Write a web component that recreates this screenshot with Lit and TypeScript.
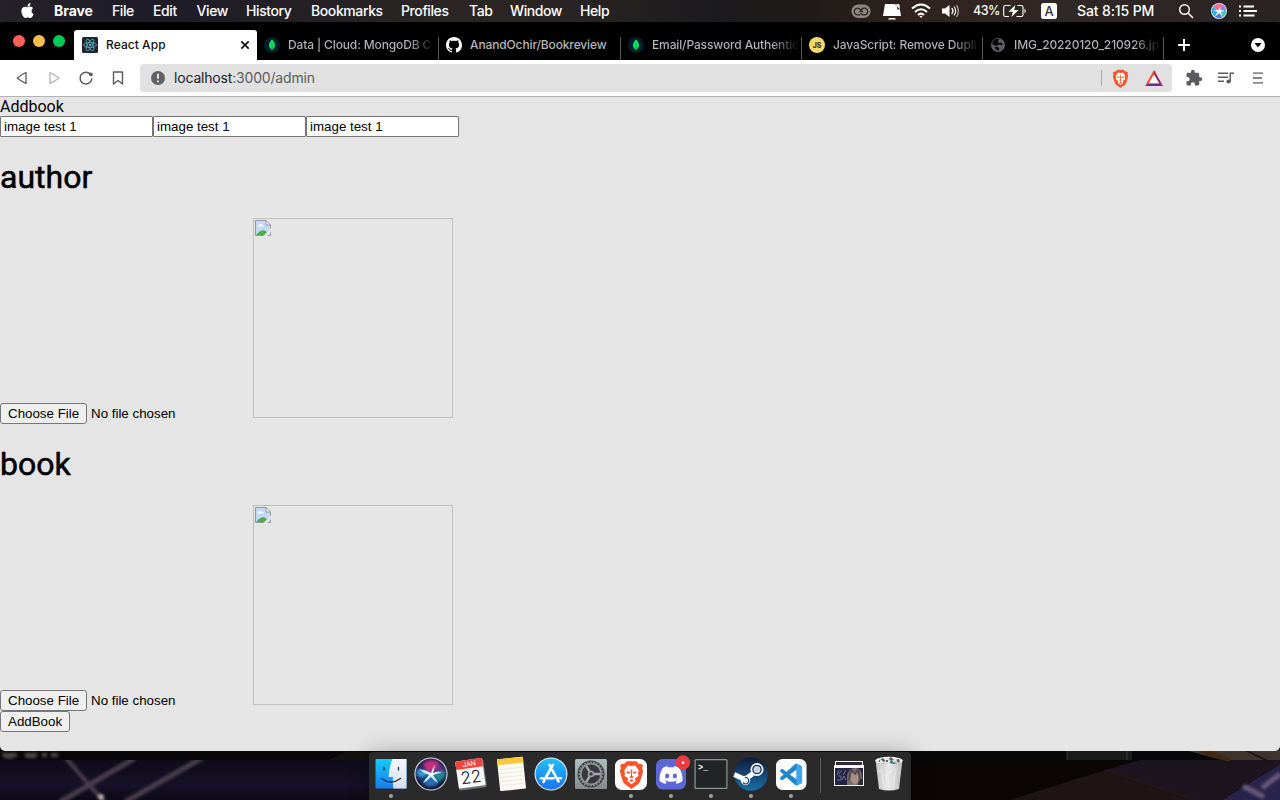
import { LitElement, html, svg, css } from "lit";
import { customElement, property } from "lit/decorators.js";

const leafIcon = html`<svg width="16" height="16" viewBox="0 0 16 16">
  <circle cx="8" cy="8" r="8" fill="#011e2b" />
  <path d="M8 2.400C10 4.400 11 6.200 11 8.300 11 10.400 9.900 11.700 8.400 12.500L8.200 13.800H7.800L7.600 12.500C6.100 11.700 5 10.400 5 8.300 5 6.200 6 4.400 8 2.400Z" fill="#00ed64" />
  <path d="M8 6V12.600" stroke="#00854a" stroke-width=".8" />
</svg>`;

const reactIcon = html`<svg width="16" height="16" viewBox="0 0 16 16">
  <rect width="16" height="16" rx="1.500" fill="#20232a" />
  <g fill="none" stroke="#57bdd6" stroke-width=".75">
    <ellipse cx="8" cy="8" rx="6.500" ry="2.500" />
    <ellipse cx="8" cy="8" rx="6.500" ry="2.500" transform="rotate(60 8 8)" />
    <ellipse cx="8" cy="8" rx="6.500" ry="2.500" transform="rotate(120 8 8)" />
  </g>
  <circle cx="8" cy="8" r="1.200" fill="#57bdd6" />
</svg>`;

const githubIcon = html`<svg width="16" height="16" viewBox="0 0 16 16">
  <path fill="#fff" d="M8 0C3.580 0 0 3.580 0 8c0 3.540 2.290 6.530 5.470 7.590.4.070.55-.17.55-.38 0-.19-.01-.82-.01-1.490-2.010.37-2.530-.49-2.690-.94-.09-.23-.48-.94-.82-1.130-.28-.15-.68-.52-.01-.53.63-.01 1.080.58 1.230.82.72 1.210 1.870.87 2.330.66.07-.52.28-.87.51-1.070-1.780-.2-3.640-.89-3.640-3.950 0-.87.31-1.590.82-2.150-.08-.2-.36-1.020.08-2.120 0 0 .67-.21 2.200.82.64-.18 1.320-.27 2-.27s1.360.09 2 .27c1.530-1.040 2.200-.82 2.200-.82.44 1.100.16 1.920.08 2.120.51.56.82 1.270.82 2.150 0 3.070-1.870 3.750-3.650 3.950.29.25.54.73.54 1.480 0 1.070-.01 1.930-.01 2.200 0 .21.15.46.55.38A8.010 8.010 0 0 0 16 8c0-4.420-3.580-8-8-8z" />
</svg>`;

const jsIcon = html`<svg width="16" height="16" viewBox="0 0 16 16">
  <circle cx="8" cy="8" r="8" fill="#f7d969" />
  <text x="8" y="10.800" text-anchor="middle" font-family="Inter, sans-serif" font-weight="800" font-size="7" fill="#3d3820">JS</text>
</svg>`;

const globeIcon = html`<svg width="16" height="16" viewBox="0 0 16 16">
  <circle cx="8" cy="8" r="7" fill="#5a5d62" />
  <path d="M5.500 2 9.500 1.800 7.800 4 9 6 11.500 5.500 13 7.500 11 8 8.500 7.500 7 8.800 4 8.200 2 6.500 3 4ZM4.500 10 7.500 9.800 9.500 11.500 8 14 6 12.500Z" fill="#08090a" />
</svg>`;

const brave = (s: number) => html`<svg width=${s} height=${s} viewBox="0 0 24 24">
  <path fill="#fb542b" d="M16 1h-8L6 3.200C4.300 2.700 3.300 3.700 2.500 4.700L3.300 6.700 2.300 8.800C4 15 4.600 18 6.200 19.700 8 21.500 10.300 22.600 12 24 13.700 22.600 16 21.500 17.800 19.700 19.400 18 20 15 21.700 8.800L20.700 6.700 21.500 4.700C20.700 3.700 19.700 2.700 18 3.200Z" />
  <path fill="#fff" d="M12 5 15 4.500 18 8.500 17.300 11.500 18 13 14.800 15.300 15.500 17.300 12 20 8.500 17.300 9.200 15.300 6 13 6.700 11.500 6 8.500 9 4.500Z" />
  <path fill="#fb542b" d="M7.800 9.300 11 10 10.400 11.200 8.200 11ZM16.200 9.300 13 10 13.600 11.200 15.800 11ZM11.300 7.800h1.400L12.400 13 13.800 14.200 12 15 10.200 14.200 11.600 13ZM10 16.700 12 15.900 14 16.700 12 18.200Z" />
</svg>`;

const siri = html`<svg width="34" height="34" viewBox="0 0 34 34">
  <defs>
    <linearGradient id="sa" x1="0" y1="0" x2=".2" y2="1"><stop offset="0" stop-color="#2c1c4c" /><stop offset=".5" stop-color="#2a2f68" /><stop offset="1" stop-color="#0b1530" /></linearGradient>
    <filter id="sf" x="-30%" y="-30%" width="160%" height="160%"><feGaussianBlur stdDeviation="1.400" /></filter>
    <filter id="sg" x="-30%" y="-30%" width="160%" height="160%"><feGaussianBlur stdDeviation=".5" /></filter>
    <clipPath id="sc"><circle cx="17" cy="17" r="15.300" /></clipPath>
  </defs>
  <circle cx="17" cy="17" r="16.600" fill="#d9dae0" />
  <circle cx="17" cy="17" r="15.500" fill="url(#sa)" />
  <g clip-path="url(#sc)">
    <g filter="url(#sf)">
      <path d="M9 7Q17 0 25 6L22 12 17 16 12 13Z" fill="#c72f80" />
      <path d="M25 7Q31 12 29 17L18 16Z" fill="#6c2d86" />
      <path d="M3 12 16 16 8 21 3 18Z" fill="#2ea1dc" />
      <path d="M31 14 18 17 25 25 31 20Z" fill="#1d8c96" />
      <path d="M17 18 8 25 14 30 22 29 25 25Z" fill="#2a6cb3" />
    </g>
    <g filter="url(#sg)">
      <path d="M5 12Q12 13 17 16 19 10 21 8 20 13 19 16 24 14 28 15 23 17 19 18 22 22 24 26 19 23 17 20 13 24 9 26 12 21 15 18 9 16 5 12Z" fill="#c8f2f7" />
      <circle cx="17.500" cy="17.500" r="2" fill="#fff" />
    </g>
  </g>
</svg>`;

const menuSiri = html`<svg width="16" height="16" viewBox="0 0 16 16">
  <circle cx="8" cy="8" r="8" fill="#e9eaf2" />
  <path d="M8 8 2 4A7 7 0 0 1 11 1.600Z" fill="#ef6f9b" /><path d="M8 8 11 1.600A7 7 0 0 1 15 7Z" fill="#a87be0" />
  <path d="M8 8 2 4A7 7 0 0 0 4 13.800Z" fill="#37aee3" /><path d="M8 8 4 13.800A7 7 0 0 0 11 14.400Z" fill="#4b7de0" />
  <path d="M8 8 15 7A7 7 0 0 1 11 14.400Z" fill="#42c3c0" />
  <path d="M9 4 9.500 7 13.500 8 9.800 9 11.500 13.500 8.500 10 4 13.500 6.500 9 2.500 7 7.500 7Z" fill="#fff" />
</svg>`;

const appleIcon = html`<svg class="apple" width="15" height="15" viewBox="0 0 24 24"><path fill="#fff" d="M12.152 6.896c-.948 0-2.415-1.078-3.960-1.040-2.040.027-3.910 1.183-4.961 3.014-2.117 3.675-.546 9.103 1.519 12.090 1.013 1.454 2.208 3.090 3.792 3.039 1.520-.065 2.090-.987 3.935-.987 1.831 0 2.350.987 3.960.948 1.637-.026 2.676-1.480 3.676-2.948 1.156-1.688 1.636-3.325 1.662-3.415-.039-.013-3.182-1.221-3.220-4.857-.026-3.040 2.480-4.494 2.597-4.559-1.429-2.090-3.623-2.324-4.390-2.376-2-.156-3.675 1.090-4.610 1.090zM15.530 3.830c.843-1.012 1.400-2.427 1.245-3.830-1.207.052-2.662.805-3.532 1.818-.78.896-1.454 2.338-1.273 3.714 1.338.104 2.715-.688 3.559-1.701" /></svg>`;

@customElement("menu-bar")
export class MenuBar extends LitElement {
  static styles = css`
    :host {
      display: grid;
      grid-template-columns: 54px 58px 41px 43.500px 49.500px 65px 90px 68px 41px 70px 271px 32px 28px 31px 31px 30px 38px 36px 101px 33px 28px 1fr;
      height: 22px;
      align-items: center;
      background: linear-gradient(90deg, #242128 0, #1e1c28 12%, #242025 24%, #2b2523 34%, #2a2524 44%, #1b1a1c 56%, #1f1a19 63%, #30231d 71%, #302826 82%, #292321 100%);
      color: #fff;
      font: 500 14px/22px Inter, sans-serif;
      letter-spacing: -0.400px;
      white-space: nowrap;
    }
    svg { display: block; }
    .apple { margin-left: 20px; margin-top: -2px; }
    .app { font-weight: 700; letter-spacing: -0.050px; }
    .pct { font-size: 12.500px; letter-spacing: -0.500px; }
    .clock { letter-spacing: -0.120px; }
    .input { width: 16px; height: 16px; border-radius: 2.500px; background: #fff; color: #333; font: 500 13px/16px Inter, sans-serif; text-align: center; }
  `;
  render() {
    return html`
      ${appleIcon}
      <span class="app">Brave</span>
      ${["File", "Edit", "View", "History", "Bookmarks", "Profiles", "Tab", "Window", "Help"].map((t) => html`<span>${t}</span>`)}
      <svg width="20" height="16" viewBox="0 0 20 16"><rect x=".5" y="1.500" width="19" height="13.500" rx="6.700" fill="#8d8783" /><g fill="none" stroke="#2d2420"><path d="M9.300 11.800H6.500A3.300 3.300 0 1 1 8.800 6.100L12 9.300" stroke-width="1.300" /><path d="M8.500 9 10.800 6.200A3.400 3.400 0 1 1 13.400 11.900H11.500L9.500 10" stroke-width="1.300" /></g></svg>
      <svg width="18" height="17" viewBox="0 0 18 17"><path fill="#fff" d="M2 1H16L18 13H0ZM6 15H12L13 16.500H5Z" /><path d="M12 1 17 6.500 14.500 6.500 13.500 1Z" fill="#332a27" /><path d="M13 1H16L17 5Z" fill="#fff" /></svg>
      <svg width="20" height="16" viewBox="0 0 20 16"><g fill="none" stroke="#fff" stroke-width="2"><path d="M1 5.500Q10-2.500 19 5.500" /><path d="M4 9Q10 3.500 16 9" /><path d="M7 12Q10 9.200 13 12" /></g><path d="M8.500 13.300Q10 12.100 11.500 13.300L10 15Z" fill="#fff" /></svg>
      <svg width="18" height="14" viewBox="0 0 18 14"><path d="M0 4.500H3L7.500 1V13L3 9.500H0Z" fill="#fff" /><g fill="none" stroke="#fff" stroke-width="1.300" stroke-linecap="round"><path d="M10 4.500Q12 7 10 9.500" /><path d="M12.300 3Q15 7 12.300 11" opacity=".9" /><path d="M14.800 1.500Q18 7 14.800 12.500" opacity=".6" /></g></svg>
      <span class="pct">43%</span>
      <svg width="24" height="14" viewBox="0 0 24 14"><path d="M7.500 1.500H2.500Q.7 1.500.7 3.300V10.700Q.7 12.500 2.500 12.500H6M14.500 1.500H18.200Q20 1.500 20 3.300V10.700Q20 12.500 18.200 12.500H13.500" fill="none" stroke="#fff" stroke-width="1.100" /><path d="M12.300 1 5.500 7.800H9.800L8.500 13 15.500 6H11.200Z" fill="#fff" /><path d="M21.500 4.500Q24 7 21.500 9.500Z" fill="#fff" /></svg>
      <span class="input">A</span>
      <span class="clock">Sat 8:15 PM</span>
      <svg width="16" height="16" viewBox="0 0 16 16"><circle cx="6.500" cy="6.500" r="4.800" fill="none" stroke="#fff" stroke-width="1.400" /><path d="M10 10 15 15" stroke="#fff" stroke-width="1.600" /></svg>
      ${menuSiri}
      <svg width="19" height="12" viewBox="0 0 19 12"><path d="M0 1.500H2M0 6H2M0 10.500H2M4.500 1.500H15M4.500 6H18M4.500 10.500H15.500" stroke="#fff" stroke-width="1.900" /></svg>
    `;
  }
}

@customElement("tab-strip")
export class TabStrip extends LitElement {
  static styles = css`
    :host {
      display: grid;
      grid-template-columns: 74px 183px 182px 182px 181px 181px 181px 1fr auto;
      height: 38px;
      background: #000;
      border-radius: 5px 5px 0 0;
      font: 500 12px/16px Inter, sans-serif;
      letter-spacing: -0.130px;
      color: #b4b6ba;
      align-items: end;
    }
    svg { display: block; flex: none; }
    .lights { display: flex; gap: 8px; padding: 0 0 13px 13px; }
    .light { width: 12px; height: 12px; border-radius: 50%; }
    .red { background: #ff5f57; }
    .amber { background: #ffbd4c; }
    .green { background: #00ca56; }
    .tab { display: flex; align-items: center; box-sizing: border-box; height: 30px; padding: 0 0 0 7px; gap: 8px; }
    .active { padding: 0 7px 0 8px; background: #fff; color: #111; border-radius: 3px 3px 0 0; letter-spacing: 0.050px; }
    .label { flex: 1; white-space: nowrap; }
    .fade { color: transparent; background: linear-gradient(90deg, #b4b6ba 120px, #000 147px); -webkit-background-clip: text; background-clip: text; }
    .tab:not(.active) { background: linear-gradient(#55575a, #55575a) right bottom / 1px 23px no-repeat; }
    .plus { margin: 0 0 9px 14px; }
    .more { margin: 0 15px 8px 0; }
  `;
  render() {
    const tabs: [unknown, string, boolean][] = [
      [leafIcon, "Data | Cloud: MongoDB C", true],
      [githubIcon, "AnandOchir/Bookreview", false],
      [leafIcon, "Email/Password Authentic", true],
      [jsIcon, "JavaScript: Remove Dupli", true],
      [globeIcon, "IMG_20220120_210926.jp", true],
    ];
    return html`
      <div class="lights"><span class="light red"></span><span class="light amber"></span><span class="light green"></span></div>
      <div class="tab active">${reactIcon}<span class="label">React App</span>
        <svg width="10" height="10" viewBox="0 0 10 10"><path d="M1.300 1.300 8.700 8.700M8.700 1.300 1.300 8.700" stroke="#111" stroke-width="1.700" /></svg></div>
      ${tabs.map(([icon, label, fade]) => html`<div class="tab">${icon}<span class="label ${fade ? "fade" : ""}">${label}</span></div>`)}
      <svg class="plus" width="12" height="12" viewBox="0 0 12 12"><path d="M6 0V12M0 6H12" stroke="#fff" stroke-width="2" /></svg>
      <svg class="more" width="14" height="14" viewBox="0 0 14 14"><circle cx="7" cy="7" r="7" fill="#fff" /><path d="M3.500 5H10.500L7 9.500Z" fill="#000" /></svg>
    `;
  }
}

@customElement("address-bar")
export class AddressBar extends LitElement {
  static styles = css`
    :host { display: flex; box-sizing: border-box; height: 37px; border-bottom: 1px solid #b2b4b4; background: #fff; align-items: center; }
    svg { display: block; flex: none; }
    .nav { display: grid; grid-template-columns: repeat(4, 32px); padding: 0 6px; justify-items: center; }
    .field { display: flex; align-items: center; box-sizing: border-box; width: 1032px; height: 28px; border-radius: 4px; background: #e1e1e1; padding: 0 9px 0 10px; font: 400 14px/20px Inter, sans-serif; color: #5c5c5e; }
    .url { margin-left: 8px; flex: 1; letter-spacing: -0.180px; }
    .host { color: #202124; }
    .rule { width: 1px; height: 16px; background: #aaa; margin-right: 9px; }
    .tri { margin-left: 15px; }
    .tools { display: grid; grid-template-columns: repeat(3, 32px); justify-items: center; padding-left: 6px; align-items: center; }
  `;
  render() {
    return html`
      <div class="nav">
        <svg width="16" height="16" viewBox="0 0 16 16"><path d="M12 2.500V13.500Q7.500 11.500 3.200 8 7.500 4.500 12 2.500Z" fill="none" stroke="#5b5b5d" stroke-width="1.300" stroke-linejoin="round" /></svg>
        <svg width="16" height="16" viewBox="0 0 16 16"><path d="M4 2.500V13.500Q8.500 11.500 12.800 8 8.500 4.500 4 2.500Z" fill="none" stroke="#b4b4b6" stroke-width="1.300" stroke-linejoin="round" /></svg>
        <svg width="16" height="16" viewBox="0 0 16 16"><path d="M12.200 4A5.900 5.900 0 1 0 13.800 9" fill="none" stroke="#5b5b5d" stroke-width="1.500" stroke-linecap="round" /><circle cx="12.800" cy="4.300" r="1.900" fill="#5b5b5d" /></svg>
        <svg width="16" height="16" viewBox="0 0 16 16"><path d="M3.500 2H12.500V14L8 10.500 3.500 14Z" fill="none" stroke="#5b5b5d" stroke-width="1.400" stroke-linejoin="round" /></svg>
      </div>
      <div class="field">
        <svg width="16" height="16" viewBox="0 0 16 16"><circle cx="8" cy="8" r="7" fill="#5f6368" /><path d="M8 3.700V8.800M8 10.500V12.300" stroke="#e1e1e1" stroke-width="2" /></svg>
        <span class="url"><span class="host">localhost</span>:3000/admin</span>
        <span class="rule"></span>
        ${brave(19)}
        <svg class="tri" width="18" height="16" viewBox="0 0 18 16"><path d="M9 0 0 16 4 13.200 9 4.500Z" fill="#ff4724" /><path d="M9 0 18 16 14 13.200 9 4.500Z" fill="#9e1f63" /><path d="M0 16H18L14 13.200H4Z" fill="#662d91" /><path d="M9 4.500 14 13.200H4Z" fill="#fff" /></svg>
      </div>
      <div class="tools">
        <svg width="18" height="18" viewBox="0 0 24 24"><path fill="#5b5b5d" d="M20.500 11H19V7c0-1.100-.9-2-2-2h-4V3.500C13 2.120 11.880 1 10.500 1S8 2.120 8 3.500V5H4c-1.100 0-1.990.9-1.990 2v3.800H3.500c1.490 0 2.700 1.210 2.700 2.700s-1.210 2.700-2.700 2.700H2V20c0 1.100.9 2 2 2h3.800v-1.500c0-1.490 1.210-2.700 2.700-2.700s2.700 1.210 2.700 2.700V22H17c1.100 0 2-.9 2-2v-4h1.500c1.380 0 2.500-1.120 2.500-2.500S21.880 11 20.500 11z" /></svg>
        <svg width="18" height="16" viewBox="0 0 18 16"><path d="M1 3.200H11M1 7.200H11M1 11.200H7M13.200 2.500V11.500M12.500 3.200H17" stroke="#5b5b5d" stroke-width="1.500" fill="none" /><circle cx="11.500" cy="11.500" r="2.100" fill="#5b5b5d" /></svg>
        <svg width="16" height="16" viewBox="0 0 16 16"><path d="M3 3.200H13M3 8H12M3 12.800H13" stroke="#5b5b5d" stroke-width="1.300" /></svg>
      </div>
    `;
  }
}

@customElement("admin-page")
export class AdminPage extends LitElement {
  static styles = css`
    :host { display: block; flex: 1; background: #e5e5e5; color: #000; font: 400 16px/19px Roboto, sans-serif; border-radius: 0 0 5px 5px; overflow: hidden; }
    .fields { display: flex; }
    input, button { font: 13.333px/15px "Liberation Sans", Arial, sans-serif; box-sizing: border-box; margin: 0; color: #000; }
    .text { width: 153px; height: 21px; padding: 1px 3px; border: 1px solid #767676; border-radius: 1px; background: #fff; }
    .heading { font-size: 32px; line-height: 38px; font-weight: 400; margin: 21.440px 0 21.500px; -webkit-text-stroke: 0.550px #000; }
    .upload { display: flex; align-items: flex-end; height: 206px; }
    .file { width: 253px; height: 21px; padding: 0; }
    .file::file-selector-button, .submit { font: 13.333px/15px "Liberation Sans", Arial, sans-serif; height: 21px; box-sizing: border-box; border: 1px solid #767676; border-radius: 3px; background: #efefef; color: #000; padding: 1px 7px; margin: 0 4px 0 0; }
    .file::file-selector-button { width: 87px; }
    .submit { width: 70px; display: block; }
    .preview { box-sizing: border-box; width: 200px; height: 200px; border: 1px solid #c0c0c0; align-self: flex-start; padding: 1px; }
    .broken { display: block; }
  `;
  private upload(title: string) {
    return html`
      <h1 class="heading">${title}</h1>
      <div class="upload">
        <input class="file" type="file" />
        <div class="preview">
          <svg class="broken" width="16" height="16" viewBox="0 0 16 16">
            <path d="M.5.5H11L15.500 5V15.500H.5Z" fill="#c3d8f6" />
            <path d="M2.500 6.500Q2.500 4.800 4.200 4.800 5.500 2.800 7 4.800 8.500 4.800 8.500 6.500Z" fill="#fff" />
            <path d="M1 15.500Q4 10.500 8 10.200 11 10.200 12 13L10 15.500Z" fill="#4eab46" />
            <path d="M15.500 5V15.500H.5V.5H11" fill="none" stroke="#979797" />
            <path d="M11 .5V5H15.500Z" fill="#fff" stroke="#979797" />
            <path d="M16 8 8.500 16H12.500L16 12Z" fill="#e5e5e5" />
          </svg>
        </div>
      </div>`;
  }
  render() {
    return html`
      <div>Addbook</div>
      <div class="fields">${[1, 2, 3].map(() => html`<input class="text" .value=${"image test 1"} />`)}</div>
      ${this.upload("author")}
      ${this.upload("book")}
      <button class="submit">AddBook</button>
    `;
  }
}

@customElement("dock-item")
export class DockItem extends LitElement {
  @property({ type: Boolean }) running = false;
  static styles = css`
    :host { display: flex; flex-direction: column; align-items: center; width: 40px; height: 48px; padding-top: 4px; box-sizing: border-box; }
    .dot { width: 4px; height: 4px; border-radius: 50%; background: #a5a5a5; margin-top: 2px; }
  `;
  render() {
    return html`<slot></slot>${this.running ? html`<span class="dot"></span>` : ""}`;
  }
}

const frame = (body: unknown) => html`<svg class="ico" width="36" height="36" viewBox="0 0 36 36">${body}</svg>`;

const teeth = Array.from({ length: 24 }, (_, i) => i * 15);

const finder = frame(svg`
  <defs><linearGradient id="fa" x2="0" y2="1"><stop stop-color="#10cdfa"/><stop offset="1" stop-color="#1a7bf0"/></linearGradient><linearGradient id="fb" x2="0" y2="1"><stop stop-color="#f4f8fc"/><stop offset="1" stop-color="#d5e0ee"/></linearGradient></defs>
  <rect x="2.500" y="3" width="31" height="29.500" rx="1" fill="url(#fa)"/>
  <path d="M19.500 3H33.500V32.500H20.500Q19.500 27 20 21H15.500Q16 11 19.500 3Z" fill="url(#fb)"/>
  <path d="M11 11.500V14M25.500 11.500V14M8.500 22.500Q18 29.500 27.500 22.500" stroke="#1c2c48" stroke-width="1.300" fill="none" stroke-linecap="round"/>`);

const calendar = frame(svg`
  <g transform="rotate(-8 18 18)"><rect x="4" y="4" width="28" height="29" rx="2" fill="#687277"/><rect x="4" y="3.500" width="27" height="27.500" rx="1.500" fill="#f8f8f8"/><path d="M4 5a1.500 1.500 0 0 1 1.500-1.500H29.500A1.500 1.500 0 0 1 31 5V12H4Z" fill="#ef453d"/>
  <text x="17.500" y="10.200" font-family="Inter, sans-serif" font-size="6.800" fill="#fff" text-anchor="middle">JAN</text>
  <text x="17.500" y="27" font-family="Inter, sans-serif" font-size="17" font-weight="300" fill="#222" text-anchor="middle">22</text></g>`);

const notes = frame(svg`
  <g transform="rotate(-6 18 18)"><rect x="5.500" y="2" width="26" height="32" rx="1" fill="#fbfaf3"/><path d="M5.500 2H31.500V8H5.500Z" fill="#fcc93b"/><path d="M7 12.500H30M7 16.500H30M7 20.500H30M7 24.500H30M7 28.500H30" stroke="#e2e1dc" stroke-width=".7"/></g>`);

const appStore = frame(svg`
  <defs><linearGradient id="as" x2="0" y2="1"><stop stop-color="#20c0fb"/><stop offset="1" stop-color="#1b73ee"/></linearGradient></defs>
  <circle cx="18" cy="18" r="16.500" fill="#e7eaf0"/><circle cx="18" cy="18" r="15.400" fill="url(#as)"/>
  <path d="M16.500 9 25.500 25.500M19.800 9 12.500 22M11.300 24.400 10.500 26M8 22.300H20.500M24 22.300H28" stroke="#fff" stroke-width="2.600" stroke-linecap="round" fill="none"/>`);

const settings = frame(svg`
  <defs><linearGradient id="sp" x2="0" y2="1"><stop stop-color="#aebdc3"/><stop offset="1" stop-color="#858b8e"/></linearGradient></defs>
  <rect x="2" y="3" width="32" height="30" rx="1.500" fill="url(#sp)"/>
  <circle cx="18" cy="18" r="13.500" fill="#37393b"/>
  ${teeth.map((a) => svg`<path d="M17.300 5.200H18.700V8H17.300Z" fill="#8d9194" transform="rotate(${a} 18 18)"/>`)}
  <circle cx="18" cy="18" r="10.300" fill="none" stroke="#8e9294" stroke-width="1.800"/>
  <path d="M18 18 27.500 18M18 18 13.200 26.200M18 18 13.200 9.800" stroke="#a7abad" stroke-width="2.400"/><circle cx="18" cy="18" r="3.300" fill="#9da1a3"/><circle cx="18" cy="18" r="1.700" fill="#3b3d3f"/>`);

const discord = frame(svg`
  <rect x="3" y="3" width="30" height="30.500" rx="6.500" fill="#5c67d8"/>
  <g transform="translate(6.500 7.500) scale(.96)"><path fill="#fff" d="M20.317 4.370a19.791 19.791 0 00-4.885-1.515.074.074 0 00-.079.037c-.211.375-.445.865-.608 1.250-1.845-.276-3.680-.276-5.487 0-.164-.393-.406-.874-.618-1.250a.077.077 0 00-.079-.037 19.736 19.736 0 00-4.885 1.515.07.07 0 00-.032.028C.533 9.046-.319 13.580.099 18.058a.082.082 0 00.031.056c2.053 1.508 4.041 2.423 5.993 3.029a.078.078 0 00.084-.028c.462-.63.873-1.295 1.226-1.994a.076.076 0 00-.042-.106c-.653-.248-1.274-.549-1.872-.892a.077.077 0 01-.008-.128c.126-.094.252-.192.372-.291a.074.074 0 01.078-.01c3.928 1.793 8.180 1.793 12.061 0a.074.074 0 01.079.009c.12.099.246.198.373.292a.077.077 0 01-.007.128 12.299 12.299 0 01-1.873.891.077.077 0 00-.041.107c.36.698.772 1.363 1.225 1.993a.076.076 0 00.084.029c1.961-.607 3.950-1.522 6.002-3.029a.077.077 0 00.031-.055c.5-5.177-.838-9.674-3.548-13.660a.061.061 0 00-.031-.029zM8.020 15.331c-1.183 0-2.157-1.086-2.157-2.419 0-1.333.955-2.419 2.157-2.419 1.211 0 2.176 1.095 2.157 2.419 0 1.333-.955 2.419-2.157 2.419zm7.975 0c-1.183 0-2.157-1.086-2.157-2.419 0-1.333.955-2.419 2.157-2.419 1.211 0 2.176 1.095 2.157 2.419 0 1.333-.946 2.419-2.157 2.419Z"/></g>
  <circle cx="30" cy="6.500" r="7.200" fill="#ee3b43"/><circle cx="30" cy="6.800" r="1.300" fill="#fff"/>`);

const terminal = frame(svg`
  <rect x="1.500" y="3" width="33" height="30" rx="1.500" fill="#8b9995"/><rect x="2.700" y="4.200" width="30.600" height="27.600" rx=".5" fill="#222526"/>
  <text x="5" y="14" font-family="Liberation Mono, monospace" font-size="8.500" font-weight="700" fill="#fff">&gt;_</text>`);

const steam = frame(svg`
  <defs><linearGradient id="st" x2="0" y2="1"><stop stop-color="#101b3d"/><stop offset="1" stop-color="#1a6fa8"/></linearGradient></defs>
  <circle cx="18" cy="18" r="16.800" fill="url(#st)"/>
  <path d="M1.200 18.500 12 23.500 22.500 15.500" stroke="#fff" stroke-width="5" fill="none"/>
  <circle cx="24" cy="13.500" r="6.500" fill="#fff"/><circle cx="24" cy="13.500" r="4.200" fill="#c9d2dd" stroke="#1a3158" stroke-width="1.300"/>
  <circle cx="12.500" cy="24.500" r="4.700" fill="#fff"/><path d="M10 26.500a3.200 3.200 0 1 0 2-5" stroke="#1b5485" stroke-width="1.300" fill="none"/>`);

const code = frame(svg`
  <rect x="3" y="3" width="30.500" height="31" rx="6.500" fill="#fff"/>
  <g transform="translate(7 7.500) scale(.92)"><path fill="#1f86cf" d="M23.150 2.587L18.210.21a1.494 1.494 0 0 0-1.705.29l-9.460 8.630-4.120-3.128a.999.999 0 0 0-1.276.057L.327 7.261A1 1 0 0 0 .326 8.740L3.899 12 .326 15.260a1 1 0 0 0 .001 1.479L1.650 17.940a.999.999 0 0 0 1.276.057l4.120-3.128 9.460 8.630a1.492 1.492 0 0 0 1.704.29l4.942-2.377A1.500 1.500 0 0 0 24 20.060V3.939a1.500 1.500 0 0 0-.85-1.352zm-5.146 14.861L10.826 12l7.178-5.448v10.896z"/><path d="M18 .2 23.200 2.600Q24 3 24 4V20Q24 21 23.200 21.400L18 23.800Z" fill="#3aa7ee"/></g>`);

const stack = frame(svg`
  <rect x="4" y="5" width="28" height="8" fill="#f2f2f2"/><rect x="5" y="6" width="26" height="3" fill="#32283d"/>
  <rect x="3" y="9" width="30" height="21" fill="#f5f5f5"/><rect x="4" y="12" width="28" height="17" fill="#252343"/>
  <path d="M16 29V19Q18 12 24 12T31 19L32 29Z" fill="#75696a"/><path d="M20 18Q24 14 27.500 19L27 26 23.500 29 20 25Z" fill="#a88e83"/><path d="M17.500 24 20 14 24 18 27 14 29.500 24" stroke="#4d474d" stroke-width="1.500" fill="none"/><path d="M28 25 32 22V29H27Z" fill="#2b2938"/>
  <path d="M6 19 8 14M8 18 11 14M12 19 15 14M6 24H10V20H7M11 24 13 20 15 24" stroke="#6f709c" stroke-width="1" fill="none"/>`);

const trash = frame(svg`
  <defs><linearGradient id="tr" x2="1"><stop stop-color="#c4c4c4"/><stop offset=".5" stop-color="#e8e8e8"/><stop offset="1" stop-color="#bdbdbd"/></linearGradient></defs>
  <path d="M4.500 4 8 33Q18 36 28 33L31.500 4Z" fill="url(#tr)"/>
  <ellipse cx="18" cy="4.500" rx="13.700" ry="3.700" fill="#f3f3f3"/><path d="M7 5 12 2 15 5 20 1 23 4 28 3 29 6 23 8 18 7 12 8Z" fill="#595f62"/><path d="M9 3 13 6 17 2 20 5 25 3 27 7 21 6 15 8 9 7Z" fill="#dce5e6"/><path d="M19 5H22V7H19Z" fill="#248ba3"/><path d="M15 4H17V6H15Z" fill="#a04f41"/>
  <path d="M10 12 13 31M16 14 15 31M25 12 22 31M7 14 14 20 24 13" stroke="#fff" stroke-width="1.500" opacity=".35" fill="none"/>`);

@customElement("mac-dock")
export class MacDock extends LitElement {
  static styles = css`
    :host { display: flex; box-sizing: border-box; width: 542px; height: 48px; padding-left: 2px; background: #2a2a2b; border-radius: 4px 4px 0 0; box-shadow: 0 0 22px rgba(0, 0, 0, 0.28); }
    .ico, .siri { display: block; overflow: visible; flex: none; }
    .siri { width: 34px; height: 36px; padding-top: 1px; box-sizing: border-box; }
    .tile { display: flex; align-items: center; justify-content: center; width: 32px; height: 31px; margin: 3px 0 2px; border-radius: 7px; background: #fff; }
    .rule { width: 1px; height: 35px; background: #5b5b5c; margin: 6px 8px 0 9px; }
  `;
  render() {
    return html`
      <dock-item running>${finder}</dock-item>
      <dock-item><div class="siri">${siri}</div></dock-item>
      <dock-item>${calendar}</dock-item>
      <dock-item>${notes}</dock-item>
      <dock-item>${appStore}</dock-item>
      <dock-item>${settings}</dock-item>
      <dock-item running><div class="tile">${brave(29)}</div></dock-item>
      <dock-item running>${discord}</dock-item>
      <dock-item running>${terminal}</dock-item>
      <dock-item running>${steam}</dock-item>
      <dock-item running>${code}</dock-item>
      <span class="rule"></span>
      <dock-item>${stack}</dock-item>
      <dock-item>${trash}</dock-item>
    `;
  }
}

@customElement("app-root")
export class AppRoot extends LitElement {
  static styles = css`
    :host { display: flex; flex-direction: column; position: relative; width: 1280px; height: 800px; overflow: hidden; background: #0d0a13; }
    .window { display: flex; flex-direction: column; height: 729px; position: relative; }
    .desk { display: flex; align-items: flex-end; justify-content: center; height: 49px; }
    .wall { position: absolute; left: 0; bottom: 0; }
    mac-dock { position: relative; }
  `;
  render() {
    return html`
      <svg class="wall" width="1280" height="60" viewBox="0 740 1280 60">
        <defs>
          <linearGradient id="w" x2="0" y2="1"><stop stop-color="#08060e" /><stop offset=".75" stop-color="#161128" /><stop offset="1" stop-color="#0d0a16" /></linearGradient>
          <filter id="b" x="-20%" y="-20%" width="140%" height="140%"><feGaussianBlur stdDeviation="1.500" /></filter>
        </defs>
        <rect y="740" width="640" height="60" fill="url(#w)" />
        <rect x="640" y="740" width="640" height="60" fill="#0b0504" />
        <g filter="url(#b)" stroke="#4a3d4b" fill="none"><path d="M65 757 105 803" stroke-width="4" /><path d="M60 802 135 758M125 802 202 758" stroke-width="5" /><circle cx="101" cy="797" r="2.500" fill="#d0c3bd" stroke="#a99a9c" /></g>
        <path d="M1010 800 1105 770 1195 800Z" fill="#1e1413" />
        <path d="M1105 770 1140 760H1280V763L1220 800H1195Z" fill="#1c141f" />
        <path d="M1105 770 1195 800M1280 763 1220 800" stroke="#2d181c" />
        <path d="M1222 800 1280 764V800Z" fill="#28234a" />
        <g filter="url(#b)" stroke="#6b5a7c" stroke-width="5"><path d="M1243 786 1264 797M1262 788 1280 774" /></g>
        <rect y="740" width="1280" height="20" fill="#090709" />
        <g filter="url(#b)"><path d="M2 753H17V756Q10 761 3 757ZM24 753H38L36 758H26ZM42 753H47V757H42ZM51 753H58V757H51Z" fill="#4c4847" /></g>
        <path d="M1067 750H1132V760H1067Z" fill="#191b1a" /><path d="M1067 750V760M1127 750V760" stroke="#373634" />
        <path d="M1185 750H1280V760H1222Z" fill="#3c342d" /><path d="M1200 750 1230 760" stroke="#42290f" stroke-width="4" /><path d="M1245 750 1270 762" stroke="#1c1513" stroke-width="1.500" />
        <path d="M328 760 346 752H370V760Z" fill="#16100f" />
      </svg>
      <menu-bar></menu-bar>
      <div class="window">
        <tab-strip></tab-strip>
        <address-bar></address-bar>
        <admin-page></admin-page>
      </div>
      <div class="desk"><mac-dock></mac-dock></div>
    `;
  }
}
